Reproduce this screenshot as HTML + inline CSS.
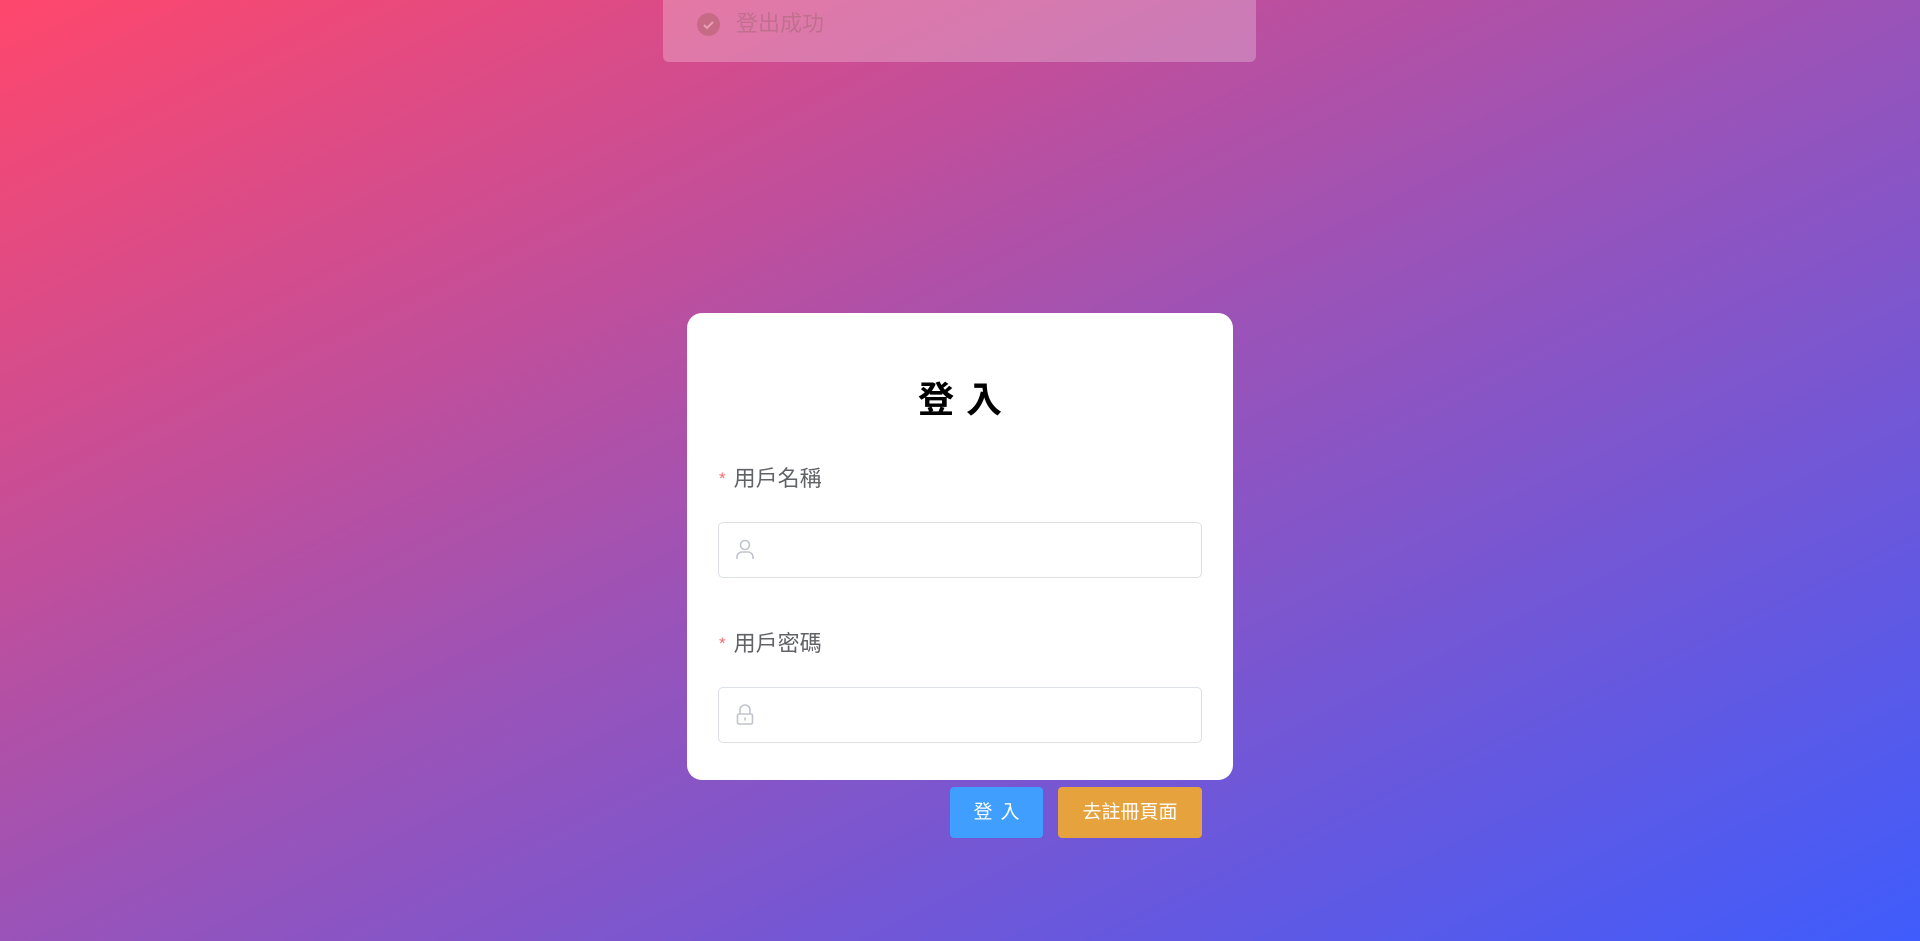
<!DOCTYPE html>
<html><head><meta charset="utf-8"><style>
html,body{margin:0;width:1920px;height:941px;overflow:hidden;font-family:"Liberation Sans","Noto Sans CJK TC",sans-serif}
body{background:linear-gradient(to bottom right,#ff476c 0%,#9a53b8 50%,#3f5cfc 100%);position:relative}
.msg{position:absolute;left:663px;top:-10px;width:593px;height:72px;border-radius:6px;background:rgba(255,255,255,0.25)}
.msg .ic{position:absolute;left:34px;top:23px;width:23px;height:23px;border-radius:50%;background:#c66a86}
.msg .tx{position:absolute;left:73px;top:20px;font-size:22px;color:#c0708e;line-height:28px}
.card{position:absolute;left:687px;top:313px;width:546px;height:467px;background:#fff;border-radius:15px}
.title{position:absolute;left:0;width:100%;top:376px;text-align:center;font-size:36px;font-weight:bold;color:#000;letter-spacing:12px;text-indent:12px;line-height:48px}
.lab{position:absolute;left:719px;font-size:22px;color:#606266;line-height:28px}
.lab b{color:#f56c6c;font-weight:normal;font-size:17px;margin-right:8px;vertical-align:2px}
.inp{position:absolute;left:718px;width:482px;height:54px;border:1px solid #dcdfe6;border-radius:5px;background:#fff}
.inp svg{position:absolute;left:16px;top:16px}
.btn{position:absolute;top:787px;height:51px;border-radius:4px;color:#fff;font-size:19px;text-align:center;line-height:51px}
</style></head><body>
<div class="msg"><div class="ic"><svg width="23" height="23" viewBox="0 0 23 23"><path d="M7 12l3 3 6-6" stroke="#e8a0b4" stroke-width="2" fill="none"/></svg></div><div class="tx">登出成功</div></div>
<div class="card"></div>
<div class="title">登入</div>
<div class="lab" style="top:465px"><b>*</b>用戶名稱</div>
<div class="inp" style="top:522px"><svg width="20" height="22" viewBox="0 0 20 22" fill="none" stroke="#c0c4cc" stroke-width="1.6"><circle cx="10" cy="6" r="4.5"/><path d="M2 20v-2a5 5 0 0 1 5-5h6a5 5 0 0 1 5 5v2"/></svg></div>
<div class="lab" style="top:630px"><b>*</b>用戶密碼</div>
<div class="inp" style="top:687px"><svg width="20" height="22" viewBox="0 0 20 22" fill="none" stroke="#c0c4cc" stroke-width="1.6"><path d="M5 10V6a5 5 0 0 1 10 0v4"/><rect x="2.5" y="10" width="15" height="10" rx="1.5"/><path d="M10 13.5v3"/></svg></div>
<div class="btn" style="left:950px;width:93px;background:#409eff;letter-spacing:8px;text-indent:8px">登入</div>
<div class="btn" style="left:1058px;width:144px;background:#e6a23c">去註冊頁面</div>
</body></html>
